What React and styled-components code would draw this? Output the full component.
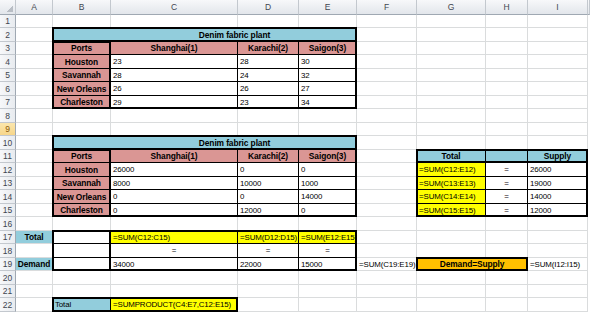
import React from 'react';
import styled, { createGlobalStyle } from 'styled-components';

const TEAL = '#92cddc';
const PINK = '#da9694';
const YELLOW = '#ffff00';
const ORANGE = '#ffc000';
const GRID = '#dadcdd';

const COLS = ['A', 'B', 'C', 'D', 'E', 'F', 'G', 'H', 'I', ''];
const WIDTHS = [16, 37, 58, 127, 61, 58, 60, 69, 42, 60];
const ROWS = 22;

const GlobalStyle = createGlobalStyle`
  html, body {
    margin: 0;
    padding: 0;
    background: #fff;
  }
  body {
    font-family: "Liberation Sans", Arial, sans-serif;
  }
`;

const Sheet = styled.div`
  display: grid;
  grid-template-columns: ${WIDTHS.map(w => `${w}px`).join(' ')} 1fr;
  grid-template-rows: 15px repeat(11, 13px 14px) 1fr;
  width: 590px;
  height: 313px;
  overflow: hidden;
  color: #000;
`;

const Corner = styled.div`
  grid-row: 1;
  grid-column: 1;
  background:
    linear-gradient(135deg, transparent 50%, #b9bec5 50%) right 2px bottom 2px / 7px 7px no-repeat,
    linear-gradient(#f7f8fa, #e2e6eb);
  border-right: 1px solid #c3c8ce;
  border-bottom: 1px solid #9fa8b2;
`;

const ColHead = styled.div`
  grid-row: 1;
  grid-column: ${p => p.$c + 1};
  background: linear-gradient(#f7f8fa, #e2e6eb);
  border-right: 1px solid #c3c8ce;
  border-bottom: 1px solid #9fa8b2;
  display: flex;
  align-items: center;
  justify-content: center;
  font-size: 8.5px;
  color: #3f4650;
`;

const RowHead = styled.div`
  grid-row: ${p => p.$r + 1};
  grid-column: 1;
  background: ${p => (p.$active ? 'linear-gradient(#fbe6ad, #f7d68a)' : 'linear-gradient(90deg, #f7f8fa, #e8ebef)')};
  border-right: 1px solid #9fa8b2;
  border-bottom: 1px solid #c3c8ce;
  display: flex;
  align-items: center;
  justify-content: center;
  font-size: 8.5px;
  color: ${p => (p.$active ? '#8a5a0c' : '#3f4650')};
`;

const Cell = styled.div`
  grid-row: ${p => p.$r + 1};
  grid-column: ${p => p.$c + 1} / span ${p => p.$span || 1};
  background: ${p => p.$fill || '#fff'};
  border-right: 1px solid ${p => (p.$ruled ? '#000' : GRID)};
  border-bottom: 1px solid ${p => (p.$ruled ? '#000' : GRID)};
  display: flex;
  align-items: center;
  justify-content: ${p => (p.$align === 'center' ? 'center' : 'flex-start')};
  padding: 1px 0 0 ${p => (p.$indent ?? (p.$align === 'center' ? 0 : 2))}px;
  white-space: nowrap;
  overflow: hidden;
  font-size: ${p => (p.$bold ? '8.4px' : '7.9px')};
  letter-spacing: ${p => (p.$bold ? '-0.1px' : '-0.12px')};
  font-weight: ${p => (p.$bold ? 700 : 400)};
  line-height: 1;
`;

const Frame = styled.div`
  grid-row: ${p => p.$r1 + 1} / ${p => p.$r2 + 2};
  grid-column: ${p => p.$c1 + 1} / ${p => p.$c2 + 2};
  margin: -1px 0 0 -1px;
  border: 2px solid #000;
`;

const t1 = [
  ['Houston', 23, 28, 30],
  ['Savannah', 28, 24, 32],
  ['New Orleans', 26, 26, 27],
  ['Charleston', 29, 23, 34],
];

const t2 = [
  ['Houston', 26000, 0, 0],
  ['Savannah', 8000, 10000, 1000],
  ['New Orleans', 0, 0, 14000],
  ['Charleston', 0, 12000, 0],
];

const supply = [26000, 19000, 14000, 12000];

function plantTable(top, rows) {
  const list = [
    { r: top, c: 2, span: 4, fill: TEAL, bold: true, align: 'center', indent: 60, text: 'Denim fabric plant' },
    { r: top + 1, c: 2, fill: PINK, bold: true, align: 'center', text: 'Ports' },
    { r: top + 1, c: 3, fill: PINK, bold: true, align: 'center', text: 'Shanghai(1)' },
    { r: top + 1, c: 4, fill: PINK, bold: true, align: 'center', text: 'Karachi(2)' },
    { r: top + 1, c: 5, fill: PINK, bold: true, align: 'center', text: 'Saigon(3)' },
  ];
  rows.forEach((row, i) => {
    list.push({ r: top + 2 + i, c: 2, fill: PINK, bold: true, align: 'center', text: row[0] });
    row.slice(1).forEach((v, j) => list.push({ r: top + 2 + i, c: 3 + j, text: String(v) }));
  });
  return list.map(cell => ({ ...cell, ruled: true }));
}

const supplyTable = [
  { r: 11, c: 7, fill: TEAL, bold: true, align: 'center', text: 'Total' },
  { r: 11, c: 8, fill: TEAL },
  { r: 11, c: 9, fill: TEAL, bold: true, align: 'center', text: 'Supply' },
  ...supply.flatMap((v, i) => [
    { r: 12 + i, c: 7, fill: YELLOW, text: `=SUM(C${12 + i}:E${12 + i})` },
    { r: 12 + i, c: 8, align: 'center', text: '=' },
    { r: 12 + i, c: 9, text: String(v) },
  ]),
].map(cell => ({ ...cell, ruled: true }));

const demandTable = [
  { r: 17, c: 2 },
  { r: 17, c: 3, fill: YELLOW, text: '=SUM(C12:C15)' },
  { r: 17, c: 4, fill: YELLOW, text: '=SUM(D12:D15)' },
  { r: 17, c: 5, fill: YELLOW, text: '=SUM(E12:E15)' },
  { r: 18, c: 2 },
  { r: 18, c: 3, align: 'center', text: '=' },
  { r: 18, c: 4, align: 'center', text: '=' },
  { r: 18, c: 5, align: 'center', text: '=' },
  { r: 19, c: 2 },
  { r: 19, c: 3, text: '34000' },
  { r: 19, c: 4, text: '22000' },
  { r: 19, c: 5, text: '15000' },
].map(cell => ({ ...cell, ruled: true }));

const CELLS = [
  ...plantTable(2, t1),
  ...plantTable(10, t2),
  ...supplyTable,
  ...demandTable,
  { r: 17, c: 1, fill: TEAL, bold: true, align: 'center', text: 'Total' },
  { r: 19, c: 1, fill: TEAL, bold: true, align: 'center', text: 'Demand' },
  { r: 19, c: 6, text: '=SUM(C19:E19)' },
  { r: 19, c: 7, span: 2, fill: ORANGE, bold: true, align: 'center', ruled: true, text: 'Demand=Supply' },
  { r: 19, c: 9, text: '=SUM(I12:I15)' },
  { r: 22, c: 2, fill: TEAL, ruled: true, text: 'Total' },
  { r: 22, c: 3, fill: YELLOW, ruled: true, text: '=SUMPRODUCT(C4:E7,C12:E15)' },
];

const FRAMES = [
  { r1: 2, c1: 2, r2: 7, c2: 5 },
  { r1: 2, c1: 2, r2: 2, c2: 5 },
  { r1: 3, c1: 2, r2: 7, c2: 2 },
  { r1: 10, c1: 2, r2: 15, c2: 5 },
  { r1: 10, c1: 2, r2: 10, c2: 5 },
  { r1: 11, c1: 2, r2: 15, c2: 2 },
  { r1: 11, c1: 7, r2: 15, c2: 9 },
  { r1: 11, c1: 7, r2: 11, c2: 9 },
  { r1: 17, c1: 2, r2: 19, c2: 5 },
  { r1: 17, c1: 2, r2: 19, c2: 2 },
  { r1: 19, c1: 7, r2: 19, c2: 8 },
  { r1: 22, c1: 2, r2: 22, c2: 3 },
];

export default function App() {
  const byPos = {};
  const covered = new Set();
  CELLS.forEach(cell => {
    byPos[`${cell.r}-${cell.c}`] = cell;
    for (let k = 1; k < (cell.span || 1); k++) covered.add(`${cell.r}-${cell.c + k}`);
  });

  const body = [];
  for (let r = 1; r <= ROWS; r++) {
    body.push(<RowHead key={`rh${r}`} $r={r} $active={r === 9}>{r}</RowHead>);
    for (let c = 1; c < COLS.length; c++) {
      const key = `${r}-${c}`;
      if (covered.has(key)) continue;
      const cell = byPos[key];
      body.push(
        cell ? (
          <Cell
            key={key}
            $r={r}
            $c={c}
            $span={cell.span}
            $fill={cell.fill}
            $bold={cell.bold}
            $align={cell.align}
            $ruled={cell.ruled}
            $indent={cell.indent}
          >
            {cell.text}
          </Cell>
        ) : (
          <Cell key={key} $r={r} $c={c} />
        )
      );
    }
  }

  return (
    <>
      <GlobalStyle />
      <Sheet>
        <Corner />
        {COLS.map((name, i) => (
          <ColHead key={`ch${i}`} $c={i + 1}>{name}</ColHead>
        ))}
        {body}
        {FRAMES.map((f, i) => (
          <Frame key={`f${i}`} {...{ $r1: f.r1, $c1: f.c1, $r2: f.r2, $c2: f.c2 }} />
        ))}
      </Sheet>
    </>
  );
}
